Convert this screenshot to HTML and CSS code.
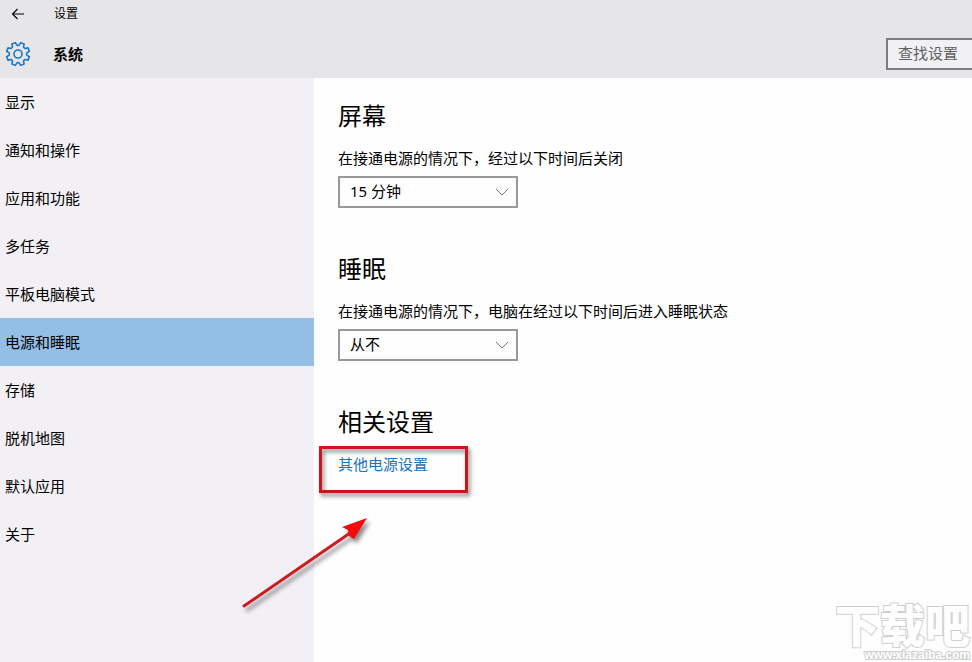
FILE: index.html
```html
<!DOCTYPE html>
<html lang="zh-CN">
<head>
<meta charset="utf-8">
<title>设置</title>
<link rel="stylesheet" href="styles.css">
</head>
<body>
<div class="window">
  <header class="header">
    <div class="titlebar">
      <button class="back" type="button" aria-label="返回">
        <svg width="14" height="12" viewBox="0 0 14 12"><path d="M13 6H1.500M6.500 1L1.500 6L6.500 11" /></svg>
      </button>
      <span class="app-name">设置</span>
    </div>
    <div class="heading">
      <svg class="gear" width="26" height="26" viewBox="-13 -13 26 26">
        <path d="M8.830 1.080L11.380 2.730L9.980 6.110L7.010 5.480Q6 6 5.480 7.010L6.110 9.980L2.730 11.380L1.080 8.830Q0 8.400 -1.080 8.830L-2.730 11.380L-6.110 9.980L-5.480 7.010Q-6 6 -7.010 5.480L-9.980 6.110L-11.380 2.730L-8.830 1.080Q-8.400 0 -8.830 -1.080L-11.380 -2.730L-9.980 -6.110L-7.010 -5.480Q-6 -6 -5.480 -7.010L-6.110 -9.980L-2.730 -11.380L-1.080 -8.830Q0 -8.400 1.080 -8.830L2.730 -11.380L6.110 -9.980L5.480 -7.010Q6 -6 7.010 -5.480L9.980 -6.110L11.380 -2.730L8.830 -1.080Q8.400 0 8.830 1.080Z" />
        <circle r="4" />
      </svg>
      <h1 class="page-title">系统</h1>
      <input class="search" type="text" placeholder="查找设置" aria-label="查找设置">
    </div>
  </header>
  <div class="body">
    <nav class="sidebar">
      <a class="item" href="#">显示</a>
      <a class="item" href="#">通知和操作</a>
      <a class="item" href="#">应用和功能</a>
      <a class="item" href="#">多任务</a>
      <a class="item" href="#">平板电脑模式</a>
      <a class="item active" href="#" aria-current="page">电源和睡眠</a>
      <a class="item" href="#">存储</a>
      <a class="item" href="#">脱机地图</a>
      <a class="item" href="#">默认应用</a>
      <a class="item" href="#">关于</a>
    </nav>
    <main class="content">
      <section class="group">
        <h2>屏幕</h2>
        <label for="screen-off">在接通电源的情况下，经过以下时间后关闭</label>
        <div class="dropdown">
          <select id="screen-off"><option>15 分钟</option></select>
          <svg class="chevron" width="14" height="8" viewBox="0 0 14 8"><path d="M1 1L7 7L13 1" /></svg>
        </div>
      </section>
      <section class="group">
        <h2>睡眠</h2>
        <label for="sleep-after">在接通电源的情况下，电脑在经过以下时间后进入睡眠状态</label>
        <div class="dropdown">
          <select id="sleep-after"><option>从不</option></select>
          <svg class="chevron" width="14" height="8" viewBox="0 0 14 8"><path d="M1 1L7 7L13 1" /></svg>
        </div>
      </section>
      <section class="group">
        <h2>相关设置</h2>
        <div class="related">
          <a class="link" href="#">其他电源设置</a>
          <span class="callout"></span>
          <svg class="arrow" width="136" height="100" viewBox="0 0 136 100">
            <path class="shaft" d="M6 92L112 19" />
            <path class="head" d="M129 4L104 13L110 16L111 22L116 25Z" />
          </svg>
        </div>
      </section>
    </main>
  </div>
  <div class="watermark">
    <span class="mark-name">下载吧</span>
    <span class="mark-url">www.xiazaiba.com</span>
  </div>
</div>
</body>
</html>
```

FILE: styles.css
```css
* {
  box-sizing: border-box;
}

body {
  margin: 0;
  background: #fefefe;
  color: #000;
  font: 15px/20px "Noto Sans", "Noto Sans CJK SC", sans-serif;
}

.window {
  position: relative;
  display: flex;
  flex-direction: column;
  min-height: 100vh;
  overflow: hidden;
}

.header {
  height: 78px;
  background: #e6e5e8;
}

.titlebar {
  display: flex;
  align-items: center;
  height: 28px;
}

.back {
  display: flex;
  justify-content: center;
  width: 36px;
  padding: 0;
  border: 0;
  background: none;
}

.back svg {
  fill: none;
  stroke: #000;
  stroke-width: 1.1;
}

.app-name {
  margin-left: 18px;
  font-size: 12px;
}

.heading {
  display: flex;
  align-items: center;
  height: 52px;
  padding-left: 5px;
}

.gear {
  fill: none;
  stroke: #1a78c8;
  stroke-width: 1.6;
  stroke-linejoin: round;
}

.page-title {
  margin: 0 auto 0 22px;
  font-size: 15px;
  font-weight: 700;
}

.search {
  width: 86px;
  height: 32px;
  padding: 0 0 2px 10px;
  border: 2px solid #7d7c7e;
  border-right: 0;
  border-radius: 0;
  background: #f1f0f3;
  font: inherit;
}

.search::placeholder {
  color: #5f5f61;
  opacity: 1;
}

.body {
  display: flex;
  flex: 1;
}

.sidebar {
  flex: 0 0 314px;
  background: #f2f0f4;
}

.item {
  display: flex;
  align-items: center;
  height: 48px;
  padding-left: 5px;
  color: #000;
  text-decoration: none;
}

.item.active {
  background: #93bfe7;
}

.content {
  flex: 1;
  padding: 22px 24px 0;
}

.group {
  height: 153px;
}

.group h2 {
  margin: 0 0 16px;
  font-size: 24px;
  line-height: 32px;
  font-weight: 400;
}

.group label {
  display: block;
  margin-bottom: 8px;
}

.dropdown {
  position: relative;
  width: 180px;
}

.dropdown select {
  display: block;
  width: 100%;
  height: 32px;
  padding: 0 30px 2px 10px;
  border: 2px solid #999;
  border-radius: 0;
  background: #fefefe;
  color: #000;
  font: inherit;
  appearance: none;
}

.chevron {
  position: absolute;
  top: 12px;
  right: 9px;
  fill: none;
  stroke: #777;
  pointer-events: none;
}

.related {
  position: relative;
}

.link {
  color: #1a74c0;
  text-decoration: none;
}

.callout {
  position: absolute;
  top: -8px;
  left: -19px;
  width: 149px;
  height: 47px;
  border: 3px solid #cb1519;
  filter: drop-shadow(2px 3px 2px rgba(0, 0, 0, 0.5));
  pointer-events: none;
}

.arrow {
  position: absolute;
  top: 60px;
  left: -100px;
  overflow: visible;
  filter: drop-shadow(3px 4px 2px rgba(0, 0, 0, 0.45));
  pointer-events: none;
}

.shaft {
  fill: none;
  stroke: #cb1b20;
  stroke-width: 3;
  stroke-linecap: round;
}

.head {
  fill: #f40b0b;
}

.watermark {
  position: absolute;
  right: 2px;
  bottom: 0;
  display: flex;
  flex-direction: column;
  align-items: flex-end;
  color: #fefefe;
  -webkit-text-stroke: 2px #cfcfcf;
  paint-order: stroke fill;
  pointer-events: none;
}

.mark-name {
  font-size: 45px;
  font-weight: 900;
  line-height: 44px;
}

.mark-url {
  font: 700 12px/14px "Liberation Sans", sans-serif;
}
```
